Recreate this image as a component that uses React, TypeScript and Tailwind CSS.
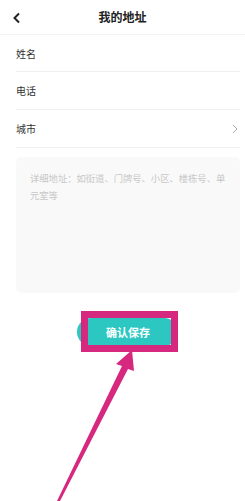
export default function App() {
  const font = { fontFamily: '"Noto Sans CJK SC", "Noto Sans", sans-serif' };
  return (
    <div className="relative h-[501px] w-[245px] overflow-hidden bg-white" style={font}>
      <header className="relative flex h-[35px] items-center justify-center border-b border-[#f3f3f3]">
        <svg className="absolute left-[12px] top-[12px]" width="9" height="12" viewBox="0 0 9 12">
          <path d="M7 1.5 L2.5 6 L7 10.5" fill="none" stroke="#222" strokeWidth="2" />
        </svg>
        <h1 className="text-[12px] font-bold text-[#222]">我的地址</h1>
      </header>

      <div className="pl-4 pr-[5px]">
        <div className="flex h-[37px] items-center border-b border-[#f0f0f0] text-[10px] text-[#333]">姓名</div>
        <div className="flex h-[38px] items-center border-b border-[#f0f0f0] text-[10px] text-[#333]">电话</div>
        <div className="flex h-[38px] items-center justify-between border-b border-[#f0f0f0] text-[10px] text-[#333]">
          <span>城市</span>
          <svg width="6" height="10" viewBox="0 0 6 10" className="mr-[2px]">
            <path d="M1 1 L5 5 L1 9" fill="none" stroke="#aaa" strokeWidth="1" />
          </svg>
        </div>

        <div className="mt-[9px] h-[136px] rounded-md bg-[#f9f9f9] pl-[14px] pr-[12px] pt-[13px] text-[9.3px] leading-[17px] text-[#c8c8c8]">
          详细地址：如街道、门牌号、小区、楼栋号、单元室等
        </div>
      </div>

      <div className="mt-[25px] pl-[77px]">
        <button className="flex h-[28px] w-[101px] items-center rounded-full bg-[#2cc7c1] pl-[29px] text-[11px] font-bold text-white">
          确认保存
        </button>
      </div>

      <div className="absolute left-[81px] top-[311px] h-[41px] w-[97px] border-[7px] border-[#d6287f]" />

      <svg className="absolute left-0 top-0" width="245" height="501" viewBox="0 0 245 501">
        <polygon
          points="132,350 134,371 128,369 60,501 57,501 122,366 116,364"
          fill="#d6287f"
        />
      </svg>
    </div>
  );
}
